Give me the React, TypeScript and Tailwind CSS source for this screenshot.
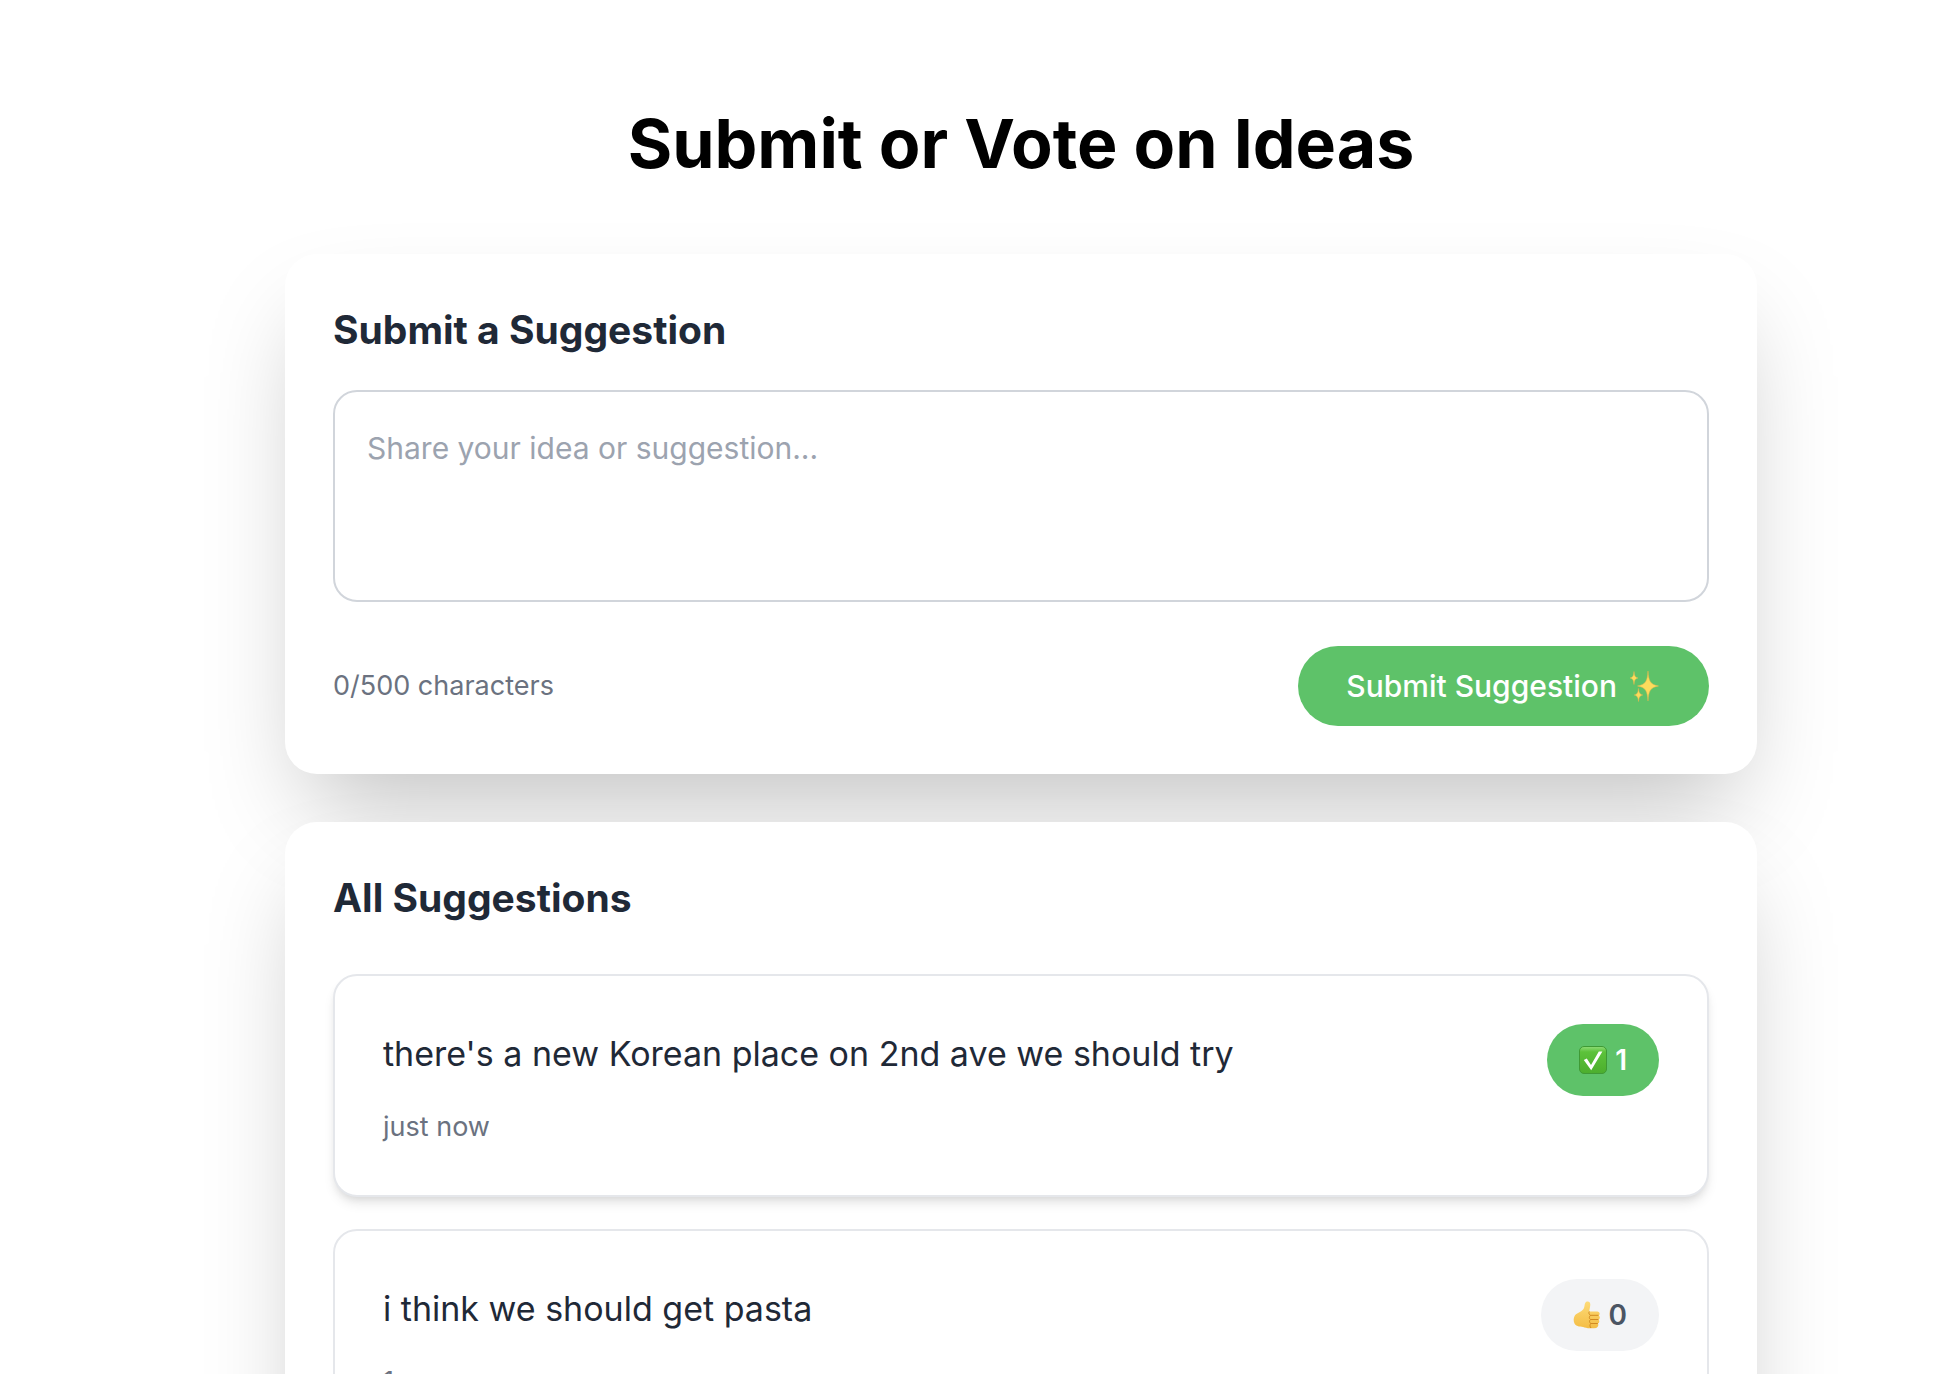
import { useState } from 'react'
import { clsx } from 'clsx'

const MAX_LENGTH = 500

interface Suggestion {
  id: number
  text: string
  createdAt: string
  votes: number
  voted: boolean
}

const initialSuggestions: Suggestion[] = [
  { id: 1, text: "there's a new Korean place on 2nd ave we should try", createdAt: 'just now', votes: 1, voted: true },
  { id: 2, text: 'i think we should get pasta', createdAt: '1m ago', votes: 0, voted: false },
]

function SparklesIcon() {
  return (
    <svg viewBox="0 0 32 32" className="size-8" aria-hidden="true">
      <g fill="#fddc5c" stroke="#e8b44c" strokeWidth="0.5">
        <path d="M19 1C19.600 11 21.300 14.600 29.500 16C21.300 17.400 19.600 21 19 31C18.400 21 16.700 17.400 8.500 16C16.700 14.600 18.400 11 19 1Z" />
        <path d="M5 1.500C5.400 6 6.200 7.300 9 8C6.200 8.700 5.400 10 5 14.500C4.600 10 3.800 8.700 1 8C3.800 7.300 4.600 6 5 1.500Z" />
        <path d="M9.500 18.500C9.900 22.800 10.700 24.200 13.800 25C10.700 25.800 9.900 27.200 9.500 31.500C9.100 27.200 8.300 25.800 5.200 25C8.300 24.200 9.100 22.800 9.500 18.500Z" />
      </g>
    </svg>
  )
}

function CheckIcon() {
  return (
    <svg viewBox="0 0 28 28" className="size-7" aria-hidden="true">
      <defs>
        <linearGradient id="check-fill" x1="0" y1="0" x2="0" y2="1">
          <stop offset="0" stopColor="#8fdc78" />
          <stop offset="0.2" stopColor="#5cc23a" />
          <stop offset="1" stopColor="#4cae2e" />
        </linearGradient>
      </defs>
      <rect x="0.5" y="0.5" width="27" height="27" rx="4.5" fill="url(#check-fill)" stroke="#3f9a35" />
      <path d="M4.800 14L7.800 12.600L12 19L19.800 5.500H23.400L12.200 24.200Z" fill="#fff" />
    </svg>
  )
}

function ThumbIcon() {
  return (
    <svg viewBox="0 0 28 28" className="size-7" aria-hidden="true">
      <defs>
        <linearGradient id="thumb-fill" x1="0" y1="0" x2="0" y2="1">
          <stop offset="0" stopColor="#fddb78" />
          <stop offset="1" stopColor="#f4bd45" />
        </linearGradient>
      </defs>
      <path
        d="M13.800 0.600C15.800 0 17.300 1.200 17.300 3.400C17.300 5.800 16.400 8 16.300 10.500H24.300C27.200 10.700 27.300 14 25.500 14.600C27.400 15.300 27.200 18.300 25.400 18.700C26.900 19.400 26.600 22.200 24.800 22.600C26 23.600 25.300 26.400 23.200 26.900C19.500 27.700 14.500 27.200 11.500 26.400C8 25.400 3.500 26 1.500 22.500C0.300 20 0.400 16.600 2 14.200C4.500 11.800 9.500 10.500 11 7C12 4.800 11.200 1.700 13.800 0.600Z"
        fill="url(#thumb-fill)"
      />
      <path
        d="M16.300 10.500C15.500 12 16 13.500 17.500 14.300H25.500M17.500 14.300C16 15.500 16 17.500 17.500 18.500H25.400M17.500 18.500C16 19.700 16.300 21.700 17.800 22.500H24.800M17.800 22.500C16.500 24 16.800 25.500 18 27"
        fill="none"
        stroke="#d18a22"
        strokeWidth="1"
      />
    </svg>
  )
}

interface VoteButtonProps {
  votes: number
  voted: boolean
  onClick: () => void
}

function VoteButton({ votes, voted, onClick }: VoteButtonProps) {
  return (
    <button
      type="button"
      onClick={onClick}
      aria-pressed={voted}
      aria-label={`Votes: ${votes}`}
      className={clsx(
        'flex h-18 shrink-0 items-center gap-2 rounded-full px-8 text-[28px] leading-10 font-semibold transition-colors',
        voted ? 'bg-[#5ec269] text-white' : 'bg-[#f3f4f6] text-[#4b5563]'
      )}
    >
      {voted ? <CheckIcon /> : <ThumbIcon />}
      {votes}
    </button>
  )
}

export default function App() {
  const [text, setText] = useState('')
  const [suggestions, setSuggestions] = useState(initialSuggestions)

  const handleSubmit = (e: React.FormEvent) => {
    e.preventDefault()
    if (!text.trim()) return
    setSuggestions((prev) => [
      { id: prev.length + 1, text: text.trim(), createdAt: 'just now', votes: 0, voted: false },
      ...prev,
    ])
    setText('')
  }

  const toggleVote = (id: number) => {
    setSuggestions((prev) =>
      prev.map((s) => (s.id === id ? { ...s, voted: !s.voted, votes: s.votes + (s.voted ? -1 : 1) } : s))
    )
  }

  return (
    <div className="h-screen overflow-hidden bg-white pl-26 font-['Inter','Liberation_Sans',sans-serif]">
      <main className="mx-auto max-w-[1472px] pt-26">
        <h1 className="mb-18 text-center text-[68px] leading-[78px] font-bold text-black">Submit or Vote on Ideas</h1>

        <div className="space-y-12">
          {/* Submit form */}
          <section className="rounded-[32px] bg-white p-12 shadow-[0_50px_100px_-24px_rgba(0,0,0,0.25)]">
            <h2 className="mb-8 text-[39px] leading-14 font-bold text-[#1f2937]">Submit a Suggestion</h2>
            <form onSubmit={handleSubmit}>
              <textarea
                value={text}
                onChange={(e) => setText(e.target.value)}
                maxLength={MAX_LENGTH}
                aria-label="Suggestion"
                placeholder="Share your idea or suggestion..."
                className="block h-[212px] w-full resize-none rounded-3xl border-2 border-[#d1d5db] bg-white p-8 text-[30px] leading-12 text-[#1f2937] placeholder:text-[#9ca3af]"
              />
              <div className="mt-11 flex items-center justify-between">
                <span className="text-[27px] leading-10 text-[#6b7280]">
                  {text.length}/{MAX_LENGTH} characters
                </span>
                <button
                  type="submit"
                  className="flex h-20 items-center gap-3 rounded-full bg-[#5ec269] px-12 text-[30px] leading-12 font-medium text-white"
                >
                  Submit Suggestion
                  <SparklesIcon />
                </button>
              </div>
            </form>
          </section>

          {/* Suggestion list */}
          <section className="rounded-[32px] bg-white p-12 shadow-[0_50px_100px_-24px_rgba(0,0,0,0.25)]">
            <h2 className="mb-12 text-[39px] leading-14 font-bold text-[#1f2937]">All Suggestions</h2>
            <ul className="space-y-8">
              {suggestions.map((s) => (
                <li
                  key={s.id}
                  className={clsx(
                    'flex items-start justify-between gap-8 rounded-3xl border-2 border-[#e5e7eb] bg-white p-12',
                    s.voted && 'shadow-[0_8px_12px_-2px_rgba(0,0,0,0.1),0_4px_8px_-4px_rgba(0,0,0,0.1)]'
                  )}
                >
                  <div>
                    <p className="mb-6 text-[34px] leading-[59px] text-[#1f2937]">{s.text}</p>
                    <p className="text-[27px] leading-10 text-[#6b7280]">{s.createdAt}</p>
                  </div>
                  <VoteButton votes={s.votes} voted={s.voted} onClick={() => toggleVote(s.id)} />
                </li>
              ))}
            </ul>
          </section>
        </div>
      </main>
    </div>
  )
}
